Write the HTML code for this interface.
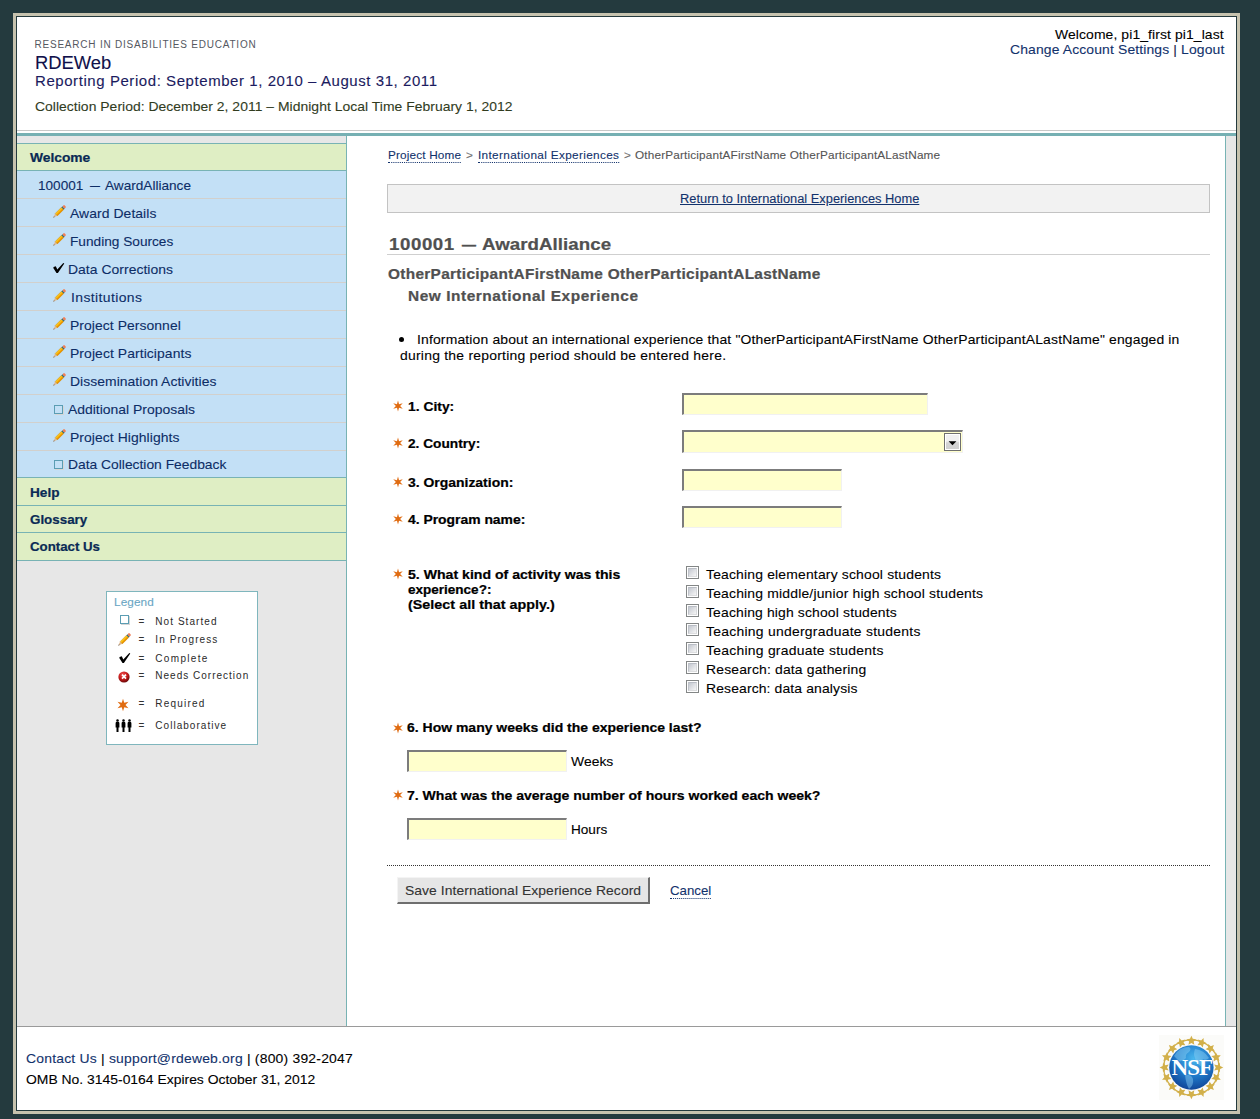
<!DOCTYPE html>
<html><head><meta charset="utf-8"><title>RDEWeb</title>
<style>
html,body{margin:0;padding:0;}
body{width:1260px;height:1119px;overflow:hidden;position:relative;background:#243a3e;font-family:"Liberation Sans",sans-serif;}
.r{position:absolute;}
.t{position:absolute;white-space:nowrap;font-family:"Liberation Sans",sans-serif;transform-origin:0 0;}
u{text-decoration:underline;}
u.dot{text-decoration:none;border-bottom:1px dotted currentColor;padding-bottom:1px;}
.inp{position:absolute;background:#ffffcc;border-top:2px solid #7c7c7c;border-left:2px solid #7c7c7c;border-right:1px solid #f1f1f1;border-bottom:1px solid #f1f1f1;box-sizing:border-box;}
.cb{position:absolute;width:13px;height:13px;box-sizing:border-box;border:1px solid #838686;background:#fff;}
.cb i{position:absolute;left:1px;top:1px;width:7px;height:7px;background:linear-gradient(135deg,#c4c8d0,#f6f6f6);border:1px solid;border-color:#b9bdc5 #d8dadd #dcdddf #bfc3ca;}
.ic{position:absolute;}
</style></head><body>
<!-- frame -->
<div class="r" style="left:13px;top:13px;width:1227px;height:1101px;background:#c6c2ae;"></div>
<div class="r" style="left:16px;top:16px;width:1221px;height:1095px;background:#243a3e;"></div>
<div class="r" style="left:17px;top:17px;width:1219px;height:1093px;background:#fff;"></div>
<!-- header bottom -->
<div class="r" style="left:17px;top:130px;width:1219px;height:1px;background:#c8c8c8;"></div>
<div class="r" style="left:17px;top:133px;width:1219px;height:3px;background:#76b0b3;"></div>
<!-- sidebar -->
<div class="r" style="left:17px;top:136px;width:329px;height:890px;background:#e7e7e7;"></div>
<div class="r" style="left:346px;top:136px;width:1px;height:890px;background:#78b3b4;"></div>
<div class="r" style="left:17px;top:143px;width:329px;height:1px;background:#78b3b4;"></div>
<div class="r" style="left:17px;top:144px;width:329px;height:26px;background:#dfeec4;"></div>
<div class="r" style="left:17px;top:170px;width:329px;height:1px;background:#78b3b4;"></div>
<div class="r" style="left:17px;top:171px;width:329px;height:306px;background:#c3e0f6;"></div>
<div class="r" style="left:17px;top:198px;width:329px;height:1px;background:#d2d0cc;"></div>
<div class="r" style="left:17px;top:226px;width:329px;height:1px;background:#d2d0cc;"></div>
<div class="r" style="left:17px;top:254px;width:329px;height:1px;background:#d2d0cc;"></div>
<div class="r" style="left:17px;top:282px;width:329px;height:1px;background:#d2d0cc;"></div>
<div class="r" style="left:17px;top:310px;width:329px;height:1px;background:#d2d0cc;"></div>
<div class="r" style="left:17px;top:338px;width:329px;height:1px;background:#d2d0cc;"></div>
<div class="r" style="left:17px;top:366px;width:329px;height:1px;background:#d2d0cc;"></div>
<div class="r" style="left:17px;top:394px;width:329px;height:1px;background:#d2d0cc;"></div>
<div class="r" style="left:17px;top:422px;width:329px;height:1px;background:#d2d0cc;"></div>
<div class="r" style="left:17px;top:450px;width:329px;height:1px;background:#d2d0cc;"></div>
<div class="r" style="left:17px;top:477px;width:329px;height:1px;background:#78b3b4;"></div>
<div class="r" style="left:17px;top:478px;width:329px;height:82px;background:#dfeec4;"></div>
<div class="r" style="left:17px;top:505px;width:329px;height:1px;background:#78b3b4;"></div>
<div class="r" style="left:17px;top:532px;width:329px;height:1px;background:#78b3b4;"></div>
<div class="r" style="left:17px;top:560px;width:329px;height:1px;background:#78b3b4;"></div>
<!-- right gutter -->
<div class="r" style="left:1225px;top:136px;width:1px;height:890px;background:#78b3b4;"></div>
<div class="r" style="left:1226px;top:136px;width:10px;height:890px;background:#e7e7e7;"></div>
<!-- footer line -->
<div class="r" style="left:17px;top:1026px;width:1219px;height:1px;background:#9a9a9a;"></div>

<!-- legend box -->
<div class="r" style="left:106px;top:591px;width:150px;height:152px;border:1px solid #7fb6bd;background:#fff;"></div>

<!-- content boxes -->
<div class="r" style="left:387px;top:184px;width:821px;height:27px;border:1px solid #c3c3c3;background:#f2f2f2;"></div>
<div class="r" style="left:387px;top:254px;width:823px;height:1px;background:#cfcfcf;"></div>
<div class="r" style="left:387px;top:865px;width:823px;height:0;border-top:1px dotted #333;"></div>

<!-- inputs -->
<div class="inp" style="left:682px;top:393px;width:246px;height:22px;"></div>
<div class="inp" style="left:682px;top:430px;width:281px;height:23px;"></div>
<div class="r" style="left:944px;top:433px;width:17px;height:18px;box-sizing:border-box;border:1px solid #6f6f6f;box-shadow:inset 0 0 0 1px #fff;background:linear-gradient(#f0f0f0 45%,#d4d4d4 55%,#d0d0d0);"></div>
<svg class="ic" style="left:944px;top:433px" width="17" height="18"><path d="M4.6 8.3 H12.4 L8.5 12.2 Z" fill="#000"/></svg>
<div class="inp" style="left:682px;top:469px;width:160px;height:22px;"></div>
<div class="inp" style="left:682px;top:506px;width:160px;height:22px;"></div>
<div class="inp" style="left:407px;top:750px;width:160px;height:22px;"></div>
<div class="inp" style="left:407px;top:818px;width:160px;height:22px;"></div>

<!-- checkboxes -->
<div class="cb" style="left:686px;top:566px"><i></i></div>
<div class="cb" style="left:686px;top:585px"><i></i></div>
<div class="cb" style="left:686px;top:604px"><i></i></div>
<div class="cb" style="left:686px;top:623px"><i></i></div>
<div class="cb" style="left:686px;top:642px"><i></i></div>
<div class="cb" style="left:686px;top:661px"><i></i></div>
<div class="cb" style="left:686px;top:680px"><i></i></div>

<!-- button -->
<div class="r" style="left:397px;top:877px;width:253px;height:27px;box-sizing:border-box;border-top:1px solid #f4f4f4;border-left:1px solid #f4f4f4;border-right:2px solid #6e6e6e;border-bottom:2px solid #6e6e6e;background:#e6e6e6;"></div>

<div class="r" style="left:399px;top:337px;width:5px;height:5px;border-radius:50%;background:#000;"></div>
<svg class="ic" style="left:52px;top:204px" width="15" height="15" viewBox="0 0 15 15"><g transform="rotate(-45 7.5 7.5)">
<polygon points="-1.5,7.5 3.0,5.9 3.0,9.1" fill="#e2b98c"/><polygon points="-1.5,7.5 0.3,6.85 0.3,8.15" fill="#6a6a6a"/>
<rect x="3.0" y="5.9" width="8.8" height="3.2" fill="#fcc414"/><rect x="3.0" y="7.6" width="8.8" height="1.5" fill="#ec9500"/>
<rect x="3.0" y="5.9" width="8.8" height="3.2" fill="none" stroke="#b9741a" stroke-width="0.35"/>
<rect x="11.8" y="5.9" width="1.5" height="3.2" fill="#2e6e7a"/><rect x="13.0" y="5.9" width="2.5" height="3.2" rx="1.1" fill="#f07e58"/></g></svg>
<svg class="ic" style="left:52px;top:232px" width="15" height="15" viewBox="0 0 15 15"><g transform="rotate(-45 7.5 7.5)">
<polygon points="-1.5,7.5 3.0,5.9 3.0,9.1" fill="#e2b98c"/><polygon points="-1.5,7.5 0.3,6.85 0.3,8.15" fill="#6a6a6a"/>
<rect x="3.0" y="5.9" width="8.8" height="3.2" fill="#fcc414"/><rect x="3.0" y="7.6" width="8.8" height="1.5" fill="#ec9500"/>
<rect x="3.0" y="5.9" width="8.8" height="3.2" fill="none" stroke="#b9741a" stroke-width="0.35"/>
<rect x="11.8" y="5.9" width="1.5" height="3.2" fill="#2e6e7a"/><rect x="13.0" y="5.9" width="2.5" height="3.2" rx="1.1" fill="#f07e58"/></g></svg>
<svg class="ic" style="left:52px;top:288px" width="15" height="15" viewBox="0 0 15 15"><g transform="rotate(-45 7.5 7.5)">
<polygon points="-1.5,7.5 3.0,5.9 3.0,9.1" fill="#e2b98c"/><polygon points="-1.5,7.5 0.3,6.85 0.3,8.15" fill="#6a6a6a"/>
<rect x="3.0" y="5.9" width="8.8" height="3.2" fill="#fcc414"/><rect x="3.0" y="7.6" width="8.8" height="1.5" fill="#ec9500"/>
<rect x="3.0" y="5.9" width="8.8" height="3.2" fill="none" stroke="#b9741a" stroke-width="0.35"/>
<rect x="11.8" y="5.9" width="1.5" height="3.2" fill="#2e6e7a"/><rect x="13.0" y="5.9" width="2.5" height="3.2" rx="1.1" fill="#f07e58"/></g></svg>
<svg class="ic" style="left:52px;top:316px" width="15" height="15" viewBox="0 0 15 15"><g transform="rotate(-45 7.5 7.5)">
<polygon points="-1.5,7.5 3.0,5.9 3.0,9.1" fill="#e2b98c"/><polygon points="-1.5,7.5 0.3,6.85 0.3,8.15" fill="#6a6a6a"/>
<rect x="3.0" y="5.9" width="8.8" height="3.2" fill="#fcc414"/><rect x="3.0" y="7.6" width="8.8" height="1.5" fill="#ec9500"/>
<rect x="3.0" y="5.9" width="8.8" height="3.2" fill="none" stroke="#b9741a" stroke-width="0.35"/>
<rect x="11.8" y="5.9" width="1.5" height="3.2" fill="#2e6e7a"/><rect x="13.0" y="5.9" width="2.5" height="3.2" rx="1.1" fill="#f07e58"/></g></svg>
<svg class="ic" style="left:52px;top:344px" width="15" height="15" viewBox="0 0 15 15"><g transform="rotate(-45 7.5 7.5)">
<polygon points="-1.5,7.5 3.0,5.9 3.0,9.1" fill="#e2b98c"/><polygon points="-1.5,7.5 0.3,6.85 0.3,8.15" fill="#6a6a6a"/>
<rect x="3.0" y="5.9" width="8.8" height="3.2" fill="#fcc414"/><rect x="3.0" y="7.6" width="8.8" height="1.5" fill="#ec9500"/>
<rect x="3.0" y="5.9" width="8.8" height="3.2" fill="none" stroke="#b9741a" stroke-width="0.35"/>
<rect x="11.8" y="5.9" width="1.5" height="3.2" fill="#2e6e7a"/><rect x="13.0" y="5.9" width="2.5" height="3.2" rx="1.1" fill="#f07e58"/></g></svg>
<svg class="ic" style="left:52px;top:372px" width="15" height="15" viewBox="0 0 15 15"><g transform="rotate(-45 7.5 7.5)">
<polygon points="-1.5,7.5 3.0,5.9 3.0,9.1" fill="#e2b98c"/><polygon points="-1.5,7.5 0.3,6.85 0.3,8.15" fill="#6a6a6a"/>
<rect x="3.0" y="5.9" width="8.8" height="3.2" fill="#fcc414"/><rect x="3.0" y="7.6" width="8.8" height="1.5" fill="#ec9500"/>
<rect x="3.0" y="5.9" width="8.8" height="3.2" fill="none" stroke="#b9741a" stroke-width="0.35"/>
<rect x="11.8" y="5.9" width="1.5" height="3.2" fill="#2e6e7a"/><rect x="13.0" y="5.9" width="2.5" height="3.2" rx="1.1" fill="#f07e58"/></g></svg>
<svg class="ic" style="left:52px;top:428px" width="15" height="15" viewBox="0 0 15 15"><g transform="rotate(-45 7.5 7.5)">
<polygon points="-1.5,7.5 3.0,5.9 3.0,9.1" fill="#e2b98c"/><polygon points="-1.5,7.5 0.3,6.85 0.3,8.15" fill="#6a6a6a"/>
<rect x="3.0" y="5.9" width="8.8" height="3.2" fill="#fcc414"/><rect x="3.0" y="7.6" width="8.8" height="1.5" fill="#ec9500"/>
<rect x="3.0" y="5.9" width="8.8" height="3.2" fill="none" stroke="#b9741a" stroke-width="0.35"/>
<rect x="11.8" y="5.9" width="1.5" height="3.2" fill="#2e6e7a"/><rect x="13.0" y="5.9" width="2.5" height="3.2" rx="1.1" fill="#f07e58"/></g></svg>
<svg class="ic" style="left:53px;top:263px" width="12" height="11" viewBox="0 0 12 11"><polygon points="0.6,3.9 2.8,3.3 4.3,6.4 10.3,0 11.3,0.5 4.9,9.9 3.5,9.9 0.3,4.9" fill="#000"/></svg>
<div class="r" style="left:54px;top:405px;width:7px;height:7px;border:1px solid #5b9db3;background:transparent;box-shadow:1px 1px 0 #d6d6d6;"></div>
<div class="r" style="left:54px;top:460px;width:7px;height:7px;border:1px solid #5b9db3;background:transparent;box-shadow:1px 1px 0 #d6d6d6;"></div>
<div class="r" style="left:120px;top:615px;width:7px;height:7px;border:1px solid #5b9db3;background:transparent;box-shadow:1px 1px 0 #d6d6d6;"></div>
<svg class="ic" style="left:117px;top:632px" width="15" height="15" viewBox="0 0 15 15"><g transform="rotate(-45 7.5 7.5)">
<polygon points="-1.5,7.5 3.0,5.9 3.0,9.1" fill="#e2b98c"/><polygon points="-1.5,7.5 0.3,6.85 0.3,8.15" fill="#6a6a6a"/>
<rect x="3.0" y="5.9" width="8.8" height="3.2" fill="#fcc414"/><rect x="3.0" y="7.6" width="8.8" height="1.5" fill="#ec9500"/>
<rect x="3.0" y="5.9" width="8.8" height="3.2" fill="none" stroke="#b9741a" stroke-width="0.35"/>
<rect x="11.8" y="5.9" width="1.5" height="3.2" fill="#2e6e7a"/><rect x="13.0" y="5.9" width="2.5" height="3.2" rx="1.1" fill="#f07e58"/></g></svg>
<svg class="ic" style="left:119px;top:653px" width="12" height="11" viewBox="0 0 12 11"><polygon points="0.6,3.9 2.8,3.3 4.3,6.4 10.3,0 11.3,0.5 4.9,9.9 3.5,9.9 0.3,4.9" fill="#000"/></svg>
<svg class="ic" style="left:118px;top:671px" width="12" height="12" viewBox="0 0 12 12"><defs><radialGradient id="rg" cx="0.4" cy="0.3" r="0.7"><stop offset="0" stop-color="#f05050"/><stop offset="0.6" stop-color="#c01818"/><stop offset="1" stop-color="#6a0808"/></radialGradient></defs>
<circle cx="6" cy="6" r="5.6" fill="url(#rg)"/><path d="M4 3.6 L8 7.6 M8 3.6 L4 7.6" stroke="#fff" stroke-width="1.6"/></svg>
<svg class="ic" style="left:116.40px;top:697.50px" width="14" height="14"><polygon points="7.00,0.70 8.25,4.83 12.46,3.85 9.50,7.00 12.46,10.15 8.25,9.17 7.00,13.30 5.75,9.17 1.54,10.15 4.50,7.00 1.54,3.85 5.75,4.83" fill="#e06c12"/></svg>
<svg class="ic" style="left:115px;top:719px" width="18" height="14" viewBox="0 0 18 14"><g fill="#000"><circle cx="2.5" cy="1.5" r="1.25"/><path d="M0.6 4.2 q0 -1.4 1.4 -1.4 h1 q1.4 0 1.4 1.4 v4.3 h-0.9 v4.6 h-2.0 v-4.6 h-0.9 z"/><circle cx="8.5" cy="1.5" r="1.25"/><path d="M6.6 4.2 q0 -1.4 1.4 -1.4 h1 q1.4 0 1.4 1.4 v4.3 h-0.9 v4.6 h-2.0 v-4.6 h-0.9 z"/><circle cx="14.5" cy="1.5" r="1.25"/><path d="M12.600000000000001 4.2 q0 -1.4 1.4 -1.4 h1 q1.4 0 1.4 1.4 v4.3 h-0.9 v4.6 h-2.0 v-4.6 h-0.9 z"/></g></svg>
<svg class="ic" style="left:390.50px;top:399.20px" width="14" height="14"><polygon points="7.00,1.50 8.05,5.18 11.76,4.25 9.10,7.00 11.76,9.75 8.05,8.82 7.00,12.50 5.95,8.82 2.24,9.75 4.90,7.00 2.24,4.25 5.95,5.18" fill="#e06c12"/></svg>
<svg class="ic" style="left:390.50px;top:436.20px" width="14" height="14"><polygon points="7.00,1.50 8.05,5.18 11.76,4.25 9.10,7.00 11.76,9.75 8.05,8.82 7.00,12.50 5.95,8.82 2.24,9.75 4.90,7.00 2.24,4.25 5.95,5.18" fill="#e06c12"/></svg>
<svg class="ic" style="left:390.50px;top:474.90px" width="14" height="14"><polygon points="7.00,1.50 8.05,5.18 11.76,4.25 9.10,7.00 11.76,9.75 8.05,8.82 7.00,12.50 5.95,8.82 2.24,9.75 4.90,7.00 2.24,4.25 5.95,5.18" fill="#e06c12"/></svg>
<svg class="ic" style="left:390.50px;top:511.70px" width="14" height="14"><polygon points="7.00,1.50 8.05,5.18 11.76,4.25 9.10,7.00 11.76,9.75 8.05,8.82 7.00,12.50 5.95,8.82 2.24,9.75 4.90,7.00 2.24,4.25 5.95,5.18" fill="#e06c12"/></svg>
<svg class="ic" style="left:390.50px;top:567.00px" width="14" height="14"><polygon points="7.00,1.50 8.05,5.18 11.76,4.25 9.10,7.00 11.76,9.75 8.05,8.82 7.00,12.50 5.95,8.82 2.24,9.75 4.90,7.00 2.24,4.25 5.95,5.18" fill="#e06c12"/></svg>
<svg class="ic" style="left:390.50px;top:720.60px" width="14" height="14"><polygon points="7.00,1.50 8.05,5.18 11.76,4.25 9.10,7.00 11.76,9.75 8.05,8.82 7.00,12.50 5.95,8.82 2.24,9.75 4.90,7.00 2.24,4.25 5.95,5.18" fill="#e06c12"/></svg>
<svg class="ic" style="left:390.50px;top:788.00px" width="14" height="14"><polygon points="7.00,1.50 8.05,5.18 11.76,4.25 9.10,7.00 11.76,9.75 8.05,8.82 7.00,12.50 5.95,8.82 2.24,9.75 4.90,7.00 2.24,4.25 5.95,5.18" fill="#e06c12"/></svg>
<svg class="ic" style="left:1159px;top:1035px" width="65" height="65" viewBox="0 0 65 65">
<rect width="65" height="65" fill="#fbfbf9"/>
<g fill="#d2b04a"><polygon points="32.40,0.70 33.81,3.76 37.16,4.15 34.68,6.44 35.34,9.75 32.40,8.10 29.46,9.75 30.12,6.44 27.64,4.15 30.99,3.76"/><polygon points="44.57,3.12 44.70,6.49 47.64,8.13 44.48,9.30 43.82,12.60 41.74,9.96 38.39,10.35 40.26,7.55 38.85,4.49 42.10,5.41"/><polygon points="54.89,10.01 53.72,13.17 55.81,15.82 52.44,15.69 50.57,18.49 49.65,15.25 46.41,14.33 49.21,12.46 49.08,9.09 51.73,11.18"/><polygon points="61.78,20.33 59.49,22.80 60.41,26.05 57.35,24.64 54.55,26.51 54.94,23.16 52.30,21.08 55.60,20.42 56.77,17.26 58.41,20.20"/><polygon points="64.20,32.50 61.14,33.91 60.75,37.26 58.46,34.78 55.15,35.44 56.80,32.50 55.15,29.56 58.46,30.22 60.75,27.74 61.14,31.09"/><polygon points="61.78,44.67 58.41,44.80 56.77,47.74 55.60,44.58 52.30,43.92 54.94,41.84 54.55,38.49 57.35,40.36 60.41,38.95 59.49,42.20"/><polygon points="54.89,54.99 51.73,53.82 49.08,55.91 49.21,52.54 46.41,50.67 49.65,49.75 50.57,46.51 52.44,49.31 55.81,49.18 53.72,51.83"/><polygon points="44.57,61.88 42.10,59.59 38.85,60.51 40.26,57.45 38.39,54.65 41.74,55.04 43.82,52.40 44.48,55.70 47.64,56.87 44.70,58.51"/><polygon points="32.40,64.30 30.99,61.24 27.64,60.85 30.12,58.56 29.46,55.25 32.40,56.90 35.34,55.25 34.68,58.56 37.16,60.85 33.81,61.24"/><polygon points="20.23,61.88 20.10,58.51 17.16,56.87 20.32,55.70 20.98,52.40 23.06,55.04 26.41,54.65 24.54,57.45 25.95,60.51 22.70,59.59"/><polygon points="9.91,54.99 11.08,51.83 8.99,49.18 12.36,49.31 14.23,46.51 15.15,49.75 18.39,50.67 15.59,52.54 15.72,55.91 13.07,53.82"/><polygon points="3.02,44.67 5.31,42.20 4.39,38.95 7.45,40.36 10.25,38.49 9.86,41.84 12.50,43.92 9.20,44.58 8.03,47.74 6.39,44.80"/><polygon points="0.60,32.50 3.66,31.09 4.05,27.74 6.34,30.22 9.65,29.56 8.00,32.50 9.65,35.44 6.34,34.78 4.05,37.26 3.66,33.91"/><polygon points="3.02,20.33 6.39,20.20 8.03,17.26 9.20,20.42 12.50,21.08 9.86,23.16 10.25,26.51 7.45,24.64 4.39,26.05 5.31,22.80"/><polygon points="9.91,10.01 13.07,11.18 15.72,9.09 15.59,12.46 18.39,14.33 15.15,15.25 14.23,18.49 12.36,15.69 8.99,15.82 11.08,13.17"/><polygon points="20.23,3.12 22.70,5.41 25.95,4.49 24.54,7.55 26.41,10.35 23.06,9.96 20.98,12.60 20.32,9.30 17.16,8.13 20.10,6.49"/></g><circle cx="32.4" cy="32.5" r="27.6" fill="none" stroke="#d2b04a" stroke-width="1.3"/>
<defs><radialGradient id="gl" cx="0.55" cy="0.3" r="0.8"><stop offset="0" stop-color="#48b6ee"/><stop offset="0.5" stop-color="#1f78c8"/><stop offset="1" stop-color="#0c368a"/></radialGradient></defs>
<circle cx="32.4" cy="32.5" r="22.2" fill="url(#gl)"/>
<path d="M15 21 q5 -9 15 -9 q3 2 0 5 q-4 2 -3 6 q-3 4 -7 3 q-3 -3 -5 -5 z M36 14 q9 1 14 9 q-3 3 -6 1 q-3 4 -2 7 q-5 -2 -6 -8 q-2 -4 0 -9 z M26 40 q6 -1 8 4 q1 6 -4 10 q-3 -5 -4 -14 z" fill="#8fd0f4" opacity="0.45"/>
<text x="32.9" y="40.1" text-anchor="middle" font-family="Liberation Serif" font-weight="bold" font-size="23" fill="#fff" letter-spacing="-0.9">NSF</text>
</svg>
<div class="t" id="t0" style="left:34.50px;top:38.53px;font-size:10px;line-height:12px;font-weight:400;color:#55585f;letter-spacing:0.782px;transform:scaleX(1.0);-webkit-text-stroke-width:0.02px;">RESEARCH IN DISABILITIES EDUCATION</div>
<div class="t" id="t1" style="left:34.50px;top:51.76px;font-size:18px;line-height:22px;font-weight:400;color:#10104a;letter-spacing:0.000px;transform:scaleX(1.0213761992224222);-webkit-text-stroke-width:0.1px;">RDEWeb</div>
<div class="t" id="t2" style="left:34.50px;top:72.65px;font-size:14px;line-height:17px;font-weight:400;color:#1b1b60;letter-spacing:0.539px;transform:scaleX(1.07);-webkit-text-stroke-width:0.1px;">Reporting Period: September 1, 2010 – August 31, 2011</div>
<div class="t" id="t3" style="left:34.50px;top:98.50px;font-size:13px;line-height:16px;font-weight:400;color:#313c1e;letter-spacing:0.030px;transform:scaleX(1.07);-webkit-text-stroke-width:0.1px;">Collection Period: December 2, 2011 – Midnight Local Time February 1, 2012</div>
<div class="t" id="t4" style="left:1055.20px;top:26.50px;font-size:13px;line-height:16px;font-weight:400;color:#000;letter-spacing:0.095px;transform:scaleX(1.07);-webkit-text-stroke-width:0.1px;">Welcome, pi1_first pi1_last</div>
<div class="t" id="t5" style="left:1009.50px;top:41.50px;font-size:13px;line-height:16px;font-weight:400;color:#1a1a50;letter-spacing:0.126px;transform:scaleX(1.07);-webkit-text-stroke-width:0.1px;"><span style="color:#12326c">Change Account Settings</span> | <span style="color:#12326c">Logout</span></div>
<div class="t" id="t6" style="left:29.70px;top:149.50px;font-size:13px;line-height:16px;font-weight:700;color:#0a2a55;letter-spacing:0.000px;transform:scaleX(1.0608026905862427);-webkit-text-stroke-width:0.22px;">Welcome</div>
<div class="t" id="t7" style="left:38.30px;top:177.50px;font-size:13px;line-height:16px;font-weight:400;color:#0d2d66;letter-spacing:0.000px;transform:scaleX(1.0440042731735115);-webkit-text-stroke-width:0.1px;">100001</div>
<div class="t" id="t8" style="left:90.00px;top:177.50px;font-size:13px;line-height:16px;font-weight:400;color:#0d2d66;letter-spacing:0.000px;transform:scaleX(0.77);-webkit-text-stroke-width:0.1px;">—</div>
<div class="t" id="t9" style="left:105.40px;top:177.50px;font-size:13px;line-height:16px;font-weight:400;color:#0d2d66;letter-spacing:0.000px;transform:scaleX(1.0469849287932793);-webkit-text-stroke-width:0.1px;">AwardAlliance</div>
<div class="t" id="t10" style="left:70.00px;top:205.50px;font-size:13px;line-height:16px;font-weight:400;color:#0d2d66;letter-spacing:0.065px;transform:scaleX(1.07);-webkit-text-stroke-width:0.1px;">Award Details</div>
<div class="t" id="t11" style="left:70.00px;top:233.50px;font-size:13px;line-height:16px;font-weight:400;color:#0d2d66;letter-spacing:0.000px;transform:scaleX(1.05106506082276);-webkit-text-stroke-width:0.1px;">Funding Sources</div>
<div class="t" id="t12" style="left:68.30px;top:261.50px;font-size:13px;line-height:16px;font-weight:400;color:#0d2d66;letter-spacing:0.039px;transform:scaleX(1.07);-webkit-text-stroke-width:0.1px;">Data Corrections</div>
<div class="t" id="t13" style="left:70.50px;top:289.50px;font-size:13px;line-height:16px;font-weight:400;color:#0d2d66;letter-spacing:0.373px;transform:scaleX(1.07);-webkit-text-stroke-width:0.1px;">Institutions</div>
<div class="t" id="t14" style="left:70.00px;top:317.50px;font-size:13px;line-height:16px;font-weight:400;color:#0d2d66;letter-spacing:0.058px;transform:scaleX(1.07);-webkit-text-stroke-width:0.1px;">Project Personnel</div>
<div class="t" id="t15" style="left:70.00px;top:345.50px;font-size:13px;line-height:16px;font-weight:400;color:#0d2d66;letter-spacing:0.077px;transform:scaleX(1.07);-webkit-text-stroke-width:0.1px;">Project Participants</div>
<div class="t" id="t16" style="left:70.00px;top:373.50px;font-size:13px;line-height:16px;font-weight:400;color:#0d2d66;letter-spacing:0.043px;transform:scaleX(1.07);-webkit-text-stroke-width:0.1px;">Dissemination Activities</div>
<div class="t" id="t17" style="left:68.30px;top:401.50px;font-size:13px;line-height:16px;font-weight:400;color:#0d2d66;letter-spacing:0.008px;transform:scaleX(1.07);-webkit-text-stroke-width:0.1px;">Additional Proposals</div>
<div class="t" id="t18" style="left:70.00px;top:429.50px;font-size:13px;line-height:16px;font-weight:400;color:#0d2d66;letter-spacing:0.064px;transform:scaleX(1.07);-webkit-text-stroke-width:0.1px;">Project Highlights</div>
<div class="t" id="t19" style="left:68.30px;top:456.50px;font-size:13px;line-height:16px;font-weight:400;color:#0d2d66;letter-spacing:0.000px;transform:scaleX(1.0640914640969084);-webkit-text-stroke-width:0.1px;">Data Collection Feedback</div>
<div class="t" id="t20" style="left:29.70px;top:484.50px;font-size:13px;line-height:16px;font-weight:700;color:#0a2a55;letter-spacing:0.000px;transform:scaleX(1.0471436236928051);-webkit-text-stroke-width:0.22px;">Help</div>
<div class="t" id="t21" style="left:29.70px;top:511.50px;font-size:13px;line-height:16px;font-weight:700;color:#0a2a55;letter-spacing:0.000px;transform:scaleX(1.0277371750472368);-webkit-text-stroke-width:0.22px;">Glossary</div>
<div class="t" id="t22" style="left:29.70px;top:538.50px;font-size:13px;line-height:16px;font-weight:700;color:#0a2a55;letter-spacing:0.000px;transform:scaleX(1.0200363886351513);-webkit-text-stroke-width:0.22px;">Contact Us</div>
<div class="t" id="t23" style="left:113.60px;top:595.69px;font-size:11px;line-height:13px;font-weight:400;color:#6aa6c4;letter-spacing:0.096px;transform:scaleX(1.07);-webkit-text-stroke-width:0.1px;">Legend</div>
<div class="t" id="t24" style="left:138.60px;top:615.53px;font-size:10px;line-height:12px;font-weight:400;color:#333;letter-spacing:0.000px;transform:scaleX(1.0);-webkit-text-stroke-width:0px;">=</div>
<div class="t" id="t25" style="left:155.30px;top:615.53px;font-size:10px;line-height:12px;font-weight:400;color:#2a2a2a;letter-spacing:1.061px;transform:scaleX(1.0);-webkit-text-stroke-width:0px;">Not Started</div>
<div class="t" id="t26" style="left:138.60px;top:633.53px;font-size:10px;line-height:12px;font-weight:400;color:#333;letter-spacing:0.000px;transform:scaleX(1.0);-webkit-text-stroke-width:0px;">=</div>
<div class="t" id="t27" style="left:155.30px;top:633.53px;font-size:10px;line-height:12px;font-weight:400;color:#2a2a2a;letter-spacing:1.086px;transform:scaleX(1.0);-webkit-text-stroke-width:0px;">In Progress</div>
<div class="t" id="t28" style="left:138.60px;top:652.53px;font-size:10px;line-height:12px;font-weight:400;color:#333;letter-spacing:0.000px;transform:scaleX(1.0);-webkit-text-stroke-width:0px;">=</div>
<div class="t" id="t29" style="left:155.30px;top:652.53px;font-size:10px;line-height:12px;font-weight:400;color:#2a2a2a;letter-spacing:1.327px;transform:scaleX(1.0);-webkit-text-stroke-width:0px;">Complete</div>
<div class="t" id="t30" style="left:138.60px;top:669.53px;font-size:10px;line-height:12px;font-weight:400;color:#333;letter-spacing:0.000px;transform:scaleX(1.0);-webkit-text-stroke-width:0px;">=</div>
<div class="t" id="t31" style="left:155.30px;top:669.53px;font-size:10px;line-height:12px;font-weight:400;color:#2a2a2a;letter-spacing:1.006px;transform:scaleX(1.0);-webkit-text-stroke-width:0px;">Needs Correction</div>
<div class="t" id="t32" style="left:138.60px;top:697.53px;font-size:10px;line-height:12px;font-weight:400;color:#333;letter-spacing:0.000px;transform:scaleX(1.0);-webkit-text-stroke-width:0px;">=</div>
<div class="t" id="t33" style="left:155.30px;top:697.53px;font-size:10px;line-height:12px;font-weight:400;color:#2a2a2a;letter-spacing:1.215px;transform:scaleX(1.0);-webkit-text-stroke-width:0px;">Required</div>
<div class="t" id="t34" style="left:138.60px;top:719.53px;font-size:10px;line-height:12px;font-weight:400;color:#333;letter-spacing:0.000px;transform:scaleX(1.0);-webkit-text-stroke-width:0px;">=</div>
<div class="t" id="t35" style="left:155.30px;top:719.53px;font-size:10px;line-height:12px;font-weight:400;color:#2a2a2a;letter-spacing:1.035px;transform:scaleX(1.0);-webkit-text-stroke-width:0px;">Collaborative</div>
<div class="t" id="t36" style="left:387.80px;top:148.69px;font-size:11px;line-height:13px;font-weight:400;color:#12326c;letter-spacing:0.152px;transform:scaleX(1.07);-webkit-text-stroke-width:0.1px;"><u class="dot">Project Home</u></div>
<div class="t" id="t37" style="left:465.60px;top:148.69px;font-size:11px;line-height:13px;font-weight:400;color:#707070;letter-spacing:0.000px;transform:scaleX(1.07);-webkit-text-stroke-width:0.1px;">&gt;</div>
<div class="t" id="t38" style="left:478.00px;top:148.69px;font-size:11px;line-height:13px;font-weight:400;color:#12326c;letter-spacing:0.318px;transform:scaleX(1.07);-webkit-text-stroke-width:0.1px;"><u class="dot">International Experiences</u></div>
<div class="t" id="t39" style="left:623.50px;top:148.69px;font-size:11px;line-height:13px;font-weight:400;color:#707070;letter-spacing:0.000px;transform:scaleX(1.07);-webkit-text-stroke-width:0.1px;">&gt;</div>
<div class="t" id="t40" style="left:635.30px;top:148.69px;font-size:11px;line-height:13px;font-weight:400;color:#555;letter-spacing:0.149px;transform:scaleX(1.07);-webkit-text-stroke-width:0.1px;">OtherParticipantAFirstName OtherParticipantALastName</div>
<div class="t" id="t41" style="left:679.60px;top:191.84px;font-size:12px;line-height:14px;font-weight:400;color:#12326c;letter-spacing:0.005px;transform:scaleX(1.07);-webkit-text-stroke-width:0.1px;"><u>Return to International Experiences Home</u></div>
<div class="t" id="t42" style="left:388.80px;top:235.11px;font-size:17px;line-height:20px;font-weight:700;color:#505050;letter-spacing:0.508px;transform:scaleX(1.1);-webkit-text-stroke-width:0.22px;">100001</div>
<div class="t" id="t43" style="left:462.00px;top:235.11px;font-size:17px;line-height:20px;font-weight:400;color:#505050;letter-spacing:0.000px;transform:scaleX(0.82);-webkit-text-stroke-width:0.5px;">—</div>
<div class="t" id="t44" style="left:482.00px;top:235.11px;font-size:17px;line-height:20px;font-weight:700;color:#505050;letter-spacing:0.043px;transform:scaleX(1.1);-webkit-text-stroke-width:0.22px;">AwardAlliance</div>
<div class="t" id="t45" style="left:387.60px;top:265.65px;font-size:14px;line-height:17px;font-weight:700;color:#505050;letter-spacing:0.279px;transform:scaleX(1.1);-webkit-text-stroke-width:0.22px;">OtherParticipantAFirstName OtherParticipantALastName</div>
<div class="t" id="t46" style="left:407.80px;top:287.65px;font-size:14px;line-height:17px;font-weight:700;color:#505050;letter-spacing:0.511px;transform:scaleX(1.1);-webkit-text-stroke-width:0.22px;">New International Experience</div>
<div class="t" id="t47" style="left:417.00px;top:331.50px;font-size:13px;line-height:16px;font-weight:400;color:#000;letter-spacing:0.152px;transform:scaleX(1.07);-webkit-text-stroke-width:0.1px;">Information about an international experience that "OtherParticipantAFirstName OtherParticipantALastName" engaged in</div>
<div class="t" id="t48" style="left:400.30px;top:347.50px;font-size:13px;line-height:16px;font-weight:400;color:#000;letter-spacing:0.225px;transform:scaleX(1.07);-webkit-text-stroke-width:0.1px;">during the reporting period should be entered here.</div>
<div class="t" id="t49" style="left:408.00px;top:398.50px;font-size:13px;line-height:16px;font-weight:700;color:#000;letter-spacing:0.000px;transform:scaleX(1.0658974843133626);-webkit-text-stroke-width:0.22px;">1. City:</div>
<div class="t" id="t50" style="left:408.00px;top:435.50px;font-size:13px;line-height:16px;font-weight:700;color:#000;letter-spacing:0.000px;transform:scaleX(1.0535520829374825);-webkit-text-stroke-width:0.22px;">2. Country:</div>
<div class="t" id="t51" style="left:408.00px;top:474.50px;font-size:13px;line-height:16px;font-weight:700;color:#000;letter-spacing:0.000px;transform:scaleX(1.0719263180072058);-webkit-text-stroke-width:0.22px;">3. Organization:</div>
<div class="t" id="t52" style="left:408.00px;top:511.50px;font-size:13px;line-height:16px;font-weight:700;color:#000;letter-spacing:0.000px;transform:scaleX(1.0680326528797601);-webkit-text-stroke-width:0.22px;">4. Program name:</div>
<div class="t" id="t53" style="left:407.80px;top:566.50px;font-size:13px;line-height:16px;font-weight:700;color:#000;letter-spacing:-0.000px;transform:scaleX(1.0844601756266572);-webkit-text-stroke-width:0.22px;">5. What kind of activity was this</div>
<div class="t" id="t54" style="left:407.80px;top:581.50px;font-size:13px;line-height:16px;font-weight:700;color:#000;letter-spacing:0.000px;transform:scaleX(1.0398595872712566);-webkit-text-stroke-width:0.22px;">experience?:</div>
<div class="t" id="t55" style="left:407.80px;top:596.50px;font-size:13px;line-height:16px;font-weight:700;color:#000;letter-spacing:0.033px;transform:scaleX(1.1);-webkit-text-stroke-width:0.22px;">(Select all that apply.)</div>
<div class="t" id="t56" style="left:706.00px;top:566.50px;font-size:13px;line-height:16px;font-weight:400;color:#000;letter-spacing:0.168px;transform:scaleX(1.07);-webkit-text-stroke-width:0.1px;">Teaching elementary school students</div>
<div class="t" id="t57" style="left:706.00px;top:585.50px;font-size:13px;line-height:16px;font-weight:400;color:#000;letter-spacing:0.176px;transform:scaleX(1.07);-webkit-text-stroke-width:0.1px;">Teaching middle/junior high school students</div>
<div class="t" id="t58" style="left:706.00px;top:604.50px;font-size:13px;line-height:16px;font-weight:400;color:#000;letter-spacing:0.144px;transform:scaleX(1.07);-webkit-text-stroke-width:0.1px;">Teaching high school students</div>
<div class="t" id="t59" style="left:706.00px;top:623.50px;font-size:13px;line-height:16px;font-weight:400;color:#000;letter-spacing:0.246px;transform:scaleX(1.07);-webkit-text-stroke-width:0.1px;">Teaching undergraduate students</div>
<div class="t" id="t60" style="left:706.00px;top:642.50px;font-size:13px;line-height:16px;font-weight:400;color:#000;letter-spacing:0.242px;transform:scaleX(1.07);-webkit-text-stroke-width:0.1px;">Teaching graduate students</div>
<div class="t" id="t61" style="left:706.00px;top:661.50px;font-size:13px;line-height:16px;font-weight:400;color:#000;letter-spacing:0.162px;transform:scaleX(1.07);-webkit-text-stroke-width:0.1px;">Research: data gathering</div>
<div class="t" id="t62" style="left:706.00px;top:680.50px;font-size:13px;line-height:16px;font-weight:400;color:#000;letter-spacing:0.125px;transform:scaleX(1.07);-webkit-text-stroke-width:0.1px;">Research: data analysis</div>
<div class="t" id="t63" style="left:407.40px;top:719.50px;font-size:13px;line-height:16px;font-weight:700;color:#000;letter-spacing:0.000px;transform:scaleX(1.0754921540656206);-webkit-text-stroke-width:0.22px;">6. How many weeks did the experience last?</div>
<div class="t" id="t64" style="left:571.20px;top:753.50px;font-size:13px;line-height:16px;font-weight:400;color:#000;letter-spacing:0.008px;transform:scaleX(1.07);-webkit-text-stroke-width:0.1px;">Weeks</div>
<div class="t" id="t65" style="left:407.40px;top:787.50px;font-size:13px;line-height:16px;font-weight:700;color:#000;letter-spacing:0.000px;transform:scaleX(1.0796816976127321);-webkit-text-stroke-width:0.22px;">7. What was the average number of hours worked each week?</div>
<div class="t" id="t66" style="left:571.20px;top:821.50px;font-size:13px;line-height:16px;font-weight:400;color:#000;letter-spacing:0.000px;transform:scaleX(1.0436042900697562);-webkit-text-stroke-width:0.1px;">Hours</div>
<div class="t" id="t67" style="left:405.20px;top:882.50px;font-size:13px;line-height:16px;font-weight:400;color:#333;letter-spacing:0.048px;transform:scaleX(1.07);-webkit-text-stroke-width:0.1px;">Save International Experience Record</div>
<div class="t" id="t68" style="left:669.70px;top:882.50px;font-size:13px;line-height:16px;font-weight:400;color:#12326c;letter-spacing:0.000px;transform:scaleX(1.020540252842682);-webkit-text-stroke-width:0.1px;"><u class="dot" style="padding-bottom:0">Cancel</u></div>
<div class="t" id="t69" style="left:25.80px;top:1050.50px;font-size:13px;line-height:16px;font-weight:400;color:#000;letter-spacing:0.198px;transform:scaleX(1.07);-webkit-text-stroke-width:0.1px;"><span style="color:#12326c">Contact Us</span> | <span style="color:#12326c">support@rdeweb.org</span> | (800) 392-2047</div>
<div class="t" id="t70" style="left:25.80px;top:1071.50px;font-size:13px;line-height:16px;font-weight:400;color:#000;letter-spacing:0.000px;transform:scaleX(1.07);-webkit-text-stroke-width:0.1px;">OMB No. 3145-0164 Expires October 31, 2012</div>
</body></html>
